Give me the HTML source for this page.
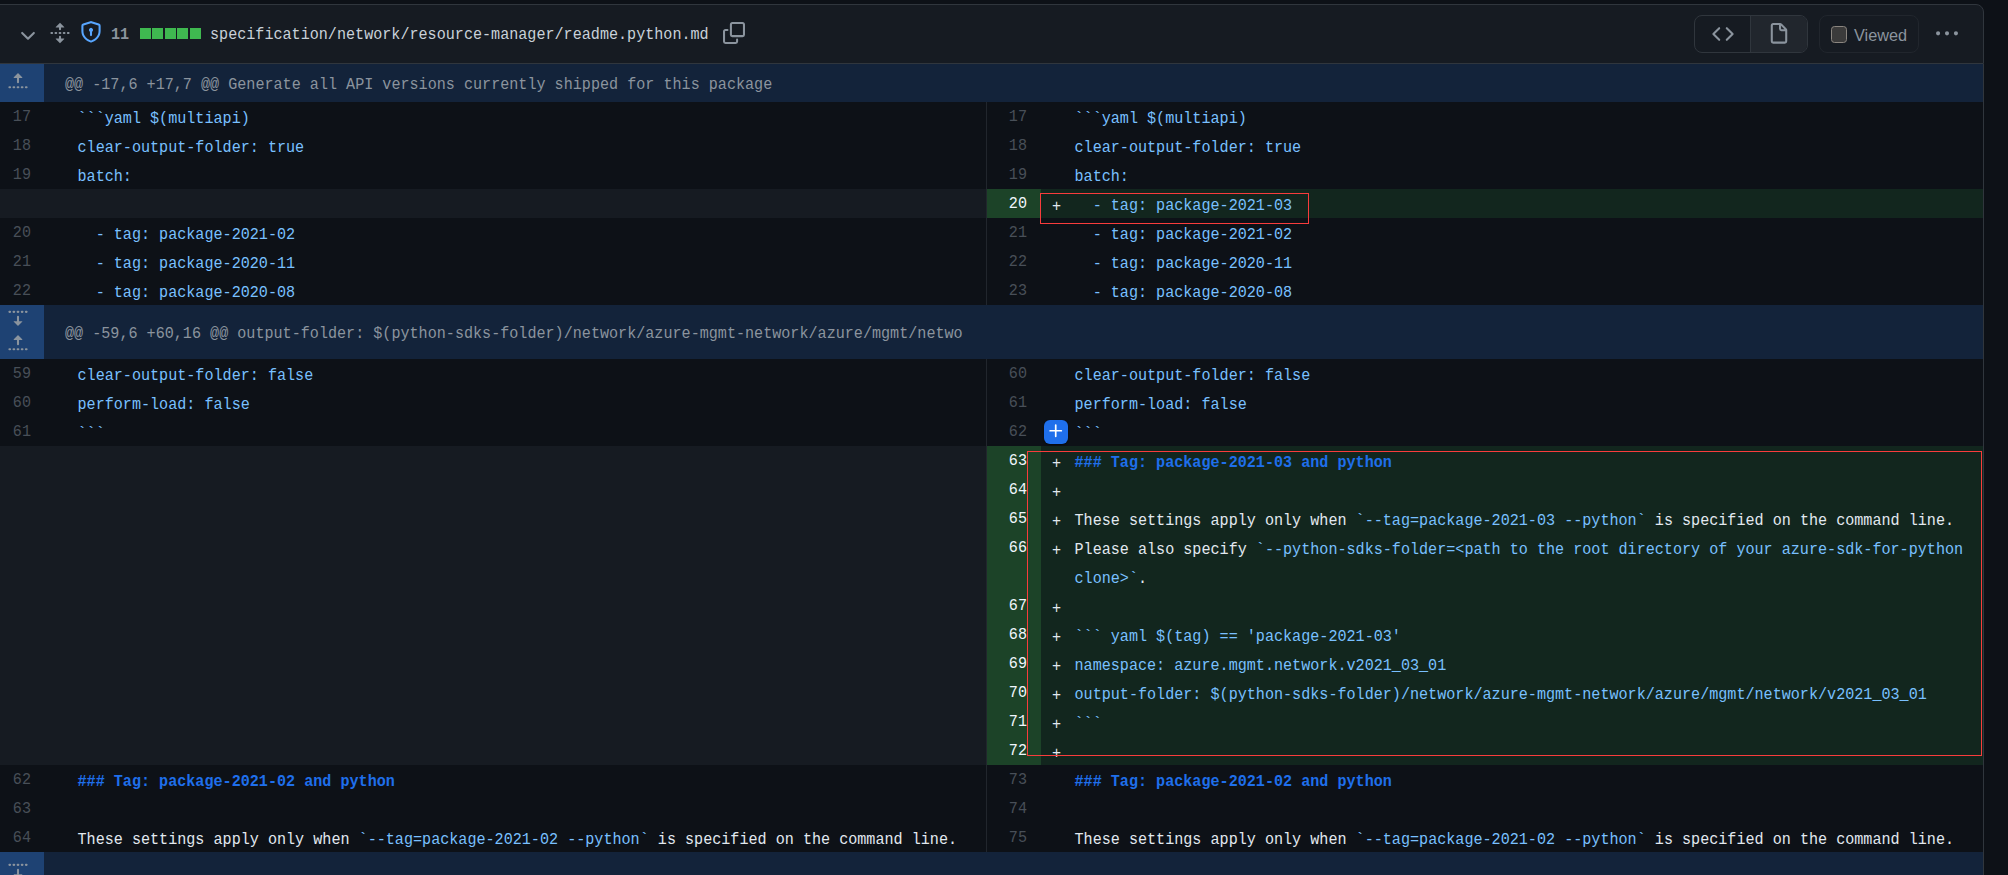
<!DOCTYPE html>
<html lang="en">
<head>
<meta charset="utf-8">
<title>readme.python.md diff</title>
<style>
html,body{margin:0;padding:0;}
body{width:2008px;height:875px;overflow:hidden;background:#0d1117;position:relative;
  font-family:"Liberation Mono","DejaVu Sans Mono",monospace;font-size:15.115px;color:#c9d1d9;}
*{box-sizing:border-box;}
.abs{position:absolute;}
svg{position:absolute;display:block;overflow:visible;}
#hdr{position:absolute;left:-10px;top:4px;width:1994px;height:60px;background:#161b22;border:1px solid #30363d;border-top-right-radius:8px;}
#rline{position:absolute;left:1983px;top:64px;width:1px;height:811px;background:#30363d;}
.mono{font-family:"Liberation Mono","DejaVu Sans Mono",monospace;font-size:15.115px;white-space:pre;}
.sans{font-family:"Liberation Sans","DejaVu Sans",sans-serif;}
/* background layer */
.bg{position:absolute;height:29px;}
.e{background:#161b22;}
.an{background:#1c4328;}
.ac{background:#12261e;}
.hk{background:#13233a;}
.hn{background:#1e4273;}
.dv{position:absolute;left:986px;width:1px;background:#21262d;}
/* text layer */
.t{position:absolute;height:29px;line-height:29px;white-space:pre;transform-origin:0 18px;}
.ln,.rn{text-align:right;color:#484f58;transform:translateY(1px) scaleY(1.05);}
.ln{left:0;width:31px;}
.rn{left:987px;width:40px;}
.lc,.rc,.mk{color:#e2e9f0;transform:translateY(3px) scaleY(1.05);}
.lc{left:77.5px;}
.rc{left:1074.5px;}
.mk{left:1052px;transform:translateY(3.7px) scaleY(1.05);}
.a{color:#f0f6fc;}
.b{color:#79c0ff;}
.h{color:#1f6feb;font-weight:bold;}
.ht{position:absolute;left:65px;color:#8b949e;white-space:pre;height:29px;line-height:29px;transform-origin:0 18px;transform:translateY(2px) scaleY(1.05);}
.hx{transform-origin:0 18px;transform:scaleY(1.05);}
.ic{fill:#8b949e;}
.red{position:absolute;border:1.5px solid #f83c3c;}
</style>
</head>
<body>
<div id="hdr"></div>
<div id="rline"></div>
<!-- chevron-down -->
<svg class="ic" style="left:16.8px;top:25.3px" width="22" height="22" viewBox="0 0 16 16"><path d="M12.78 5.22a.749.749 0 0 1 0 1.06l-4.25 4.25a.749.749 0 0 1-1.06 0L3.22 6.28a.749.749 0 1 1 1.06-1.06L8 8.939l3.72-3.719a.749.749 0 0 1 1.06 0Z"/></svg>
<!-- unfold -->
<svg class="ic" style="left:48.8px;top:21.5px" width="22" height="22" viewBox="0 0 16 16"><path d="m8.177.677 2.896 2.896a.25.25 0 0 1-.177.427H8.75v1.25a.75.75 0 0 1-1.5 0V4H5.104a.25.25 0 0 1-.177-.427L7.823.677a.25.25 0 0 1 .354 0ZM7.25 10.75a.75.75 0 0 1 1.5 0V12h2.146a.25.25 0 0 1 .177.427l-2.896 2.896a.25.25 0 0 1-.354 0l-2.896-2.896A.25.25 0 0 1 5.104 12H7.25v-1.25Zm-5-2a.75.75 0 0 0 0-1.5h-.5a.75.75 0 0 0 0 1.5h.5ZM6 8a.75.75 0 0 1-.75.75h-.5a.75.75 0 0 1 0-1.5h.5A.75.75 0 0 1 6 8Zm2.25.75a.75.75 0 0 0 0-1.5h-.5a.75.75 0 0 0 0 1.5h.5ZM12 8a.75.75 0 0 1-.75.75h-.5a.75.75 0 0 1 0-1.5h.5A.75.75 0 0 1 12 8Zm2.25.75a.75.75 0 0 0 0-1.5h-.5a.75.75 0 0 0 0 1.5h.5Z"/></svg>
<!-- shield-lock -->
<svg style="left:79.9px;top:20.7px;fill:#58a6ff" width="22" height="22" viewBox="0 0 16 16"><path d="m8.533.133 5.25 1.68A1.75 1.75 0 0 1 15 3.48V7c0 1.566-.32 3.182-1.303 4.682-.983 1.498-2.585 2.813-5.032 3.855a1.697 1.697 0 0 1-1.33 0c-2.447-1.042-4.049-2.357-5.032-3.855C1.32 10.182 1 8.566 1 7V3.48a1.75 1.75 0 0 1 1.217-1.667l5.25-1.68a1.748 1.748 0 0 1 1.066 0Zm-.61 1.429.001.001-5.25 1.68a.251.251 0 0 0-.174.237V7c0 1.36.275 2.666 1.057 3.859.784 1.194 2.121 2.342 4.366 3.298a.196.196 0 0 0 .154 0c2.245-.957 3.582-2.103 4.366-3.297C13.225 9.666 13.5 8.358 13.5 7V3.48a.25.25 0 0 0-.174-.238l-5.25-1.68a.25.25 0 0 0-.153 0ZM9.5 6.5c0 .536-.286 1.032-.75 1.3v2.45a.75.75 0 0 1-1.5 0V7.8A1.5 1.5 0 1 1 9.5 6.5Z"/></svg>
<div class="abs mono hx" style="left:111px;top:21px;line-height:29px;color:#8b949e;font-weight:bold">11</div>
<div class="abs" style="left:140px;top:28px;width:11px;height:11px;background:#3fb950"></div>
<div class="abs" style="left:152.4px;top:28px;width:11px;height:11px;background:#3fb950"></div>
<div class="abs" style="left:164.8px;top:28px;width:11px;height:11px;background:#3fb950"></div>
<div class="abs" style="left:177.1px;top:28px;width:11px;height:11px;background:#3fb950"></div>
<div class="abs" style="left:189.5px;top:28px;width:11px;height:11px;background:#3fb950"></div>
<div class="abs mono hx" style="left:210px;top:21px;line-height:29px;color:#c9d1d9">specification/network/resource-manager/readme.python.md</div>
<!-- copy -->
<svg class="ic" style="left:722.7px;top:21.5px" width="22" height="22" viewBox="0 0 16 16"><path d="M0 6.75C0 5.784.784 5 1.75 5h1.5a.75.75 0 0 1 0 1.5h-1.5a.25.25 0 0 0-.25.25v7.5c0 .138.112.25.25.25h7.5a.25.25 0 0 0 .25-.25v-1.5a.75.75 0 0 1 1.5 0v1.5A1.75 1.75 0 0 1 9.25 16h-7.5A1.75 1.75 0 0 1 0 14.25Z"/><path d="M5 1.75C5 .784 5.784 0 6.75 0h7.5C15.216 0 16 .784 16 1.75v7.5A1.75 1.75 0 0 1 14.25 11h-7.5A1.75 1.75 0 0 1 5 9.25Zm1.750-.25a.25.25 0 0 0-.25.25v7.5c0 .138.112.25.25.25h7.5a.25.25 0 0 0 .25-.25v-7.5a.25.25 0 0 0-.25-.25Z"/></svg>
<!-- segmented buttons -->
<div class="abs" style="left:1694px;top:15px;width:114px;height:38px;border:1px solid #30363d;border-radius:8px;background:#161b22;overflow:hidden">
  <div class="abs" style="left:55px;top:0;width:58px;height:36px;background:#21262d;border-left:1px solid #30363d"></div>
</div>
<svg class="ic" style="left:1712px;top:23px" width="22" height="22" viewBox="0 0 16 16"><path d="m11.28 3.22 4.25 4.25a.75.75 0 0 1 0 1.06l-4.25 4.25a.749.749 0 0 1-1.275-.326.749.749 0 0 1 .215-.734L13.94 8l-3.72-3.72a.749.749 0 0 1 .326-1.275.749.749 0 0 1 .734.215Zm-6.56 0a.751.751 0 0 1 1.042.018.751.751 0 0 1 .018 1.042L2.06 8l3.72 3.72a.749.749 0 0 1-.326 1.275.749.749 0 0 1-.734-.215L.47 8.53a.75.75 0 0 1 0-1.06Z"/></svg>
<svg class="ic" style="left:1768px;top:22.9px" width="22" height="22" viewBox="0 0 16 16"><path fill-rule="evenodd" d="M3.75 1.5a.25.25 0 0 0-.25.25v11.5c0 .138.112.25.25.25h8.5a.25.25 0 0 0 .25-.25V6H9.75A1.75 1.75 0 0 1 8 4.25V1.5H3.75zm5.75.56v2.19c0 .138.112.25.25.25h2.19L9.5 2.06zM2 1.75C2 .784 2.784 0 3.75 0h5.086c.464 0 .909.184 1.237.513l3.414 3.414c.329.328.513.773.513 1.237v8.086A1.75 1.75 0 0 1 12.250 15h-8.5A1.75 1.75 0 0 1 2 13.25V1.750z"/></svg>
<!-- viewed -->
<div class="abs" style="left:1819px;top:15px;width:100px;height:38px;border:1px solid #21262d;border-radius:8px;background:#161b22"></div>
<div class="abs" style="left:1830.5px;top:26px;width:16.5px;height:16.5px;border:1.5px solid #8b8680;border-radius:3.5px;background:#3b3b3b"></div>
<div class="abs sans" style="left:1854px;top:21px;line-height:29px;font-size:16.3px;color:#8b949e">Viewed</div>
<!-- kebab -->
<svg class="ic" style="left:1935.7px;top:23px" width="22" height="22" viewBox="0 0 16 16"><path d="M8 9a1.5 1.5 0 1 0 0-3 1.5 1.5 0 0 0 0 3ZM1.5 9a1.5 1.5 0 1 0 0-3 1.5 1.5 0 0 0 0 3Zm13 0a1.5 1.5 0 1 0 0-3 1.5 1.5 0 0 0 0 3Z"/></svg>

<!-- hunk 1 -->
<div class="bg hk" style="left:0px;top:64px;width:1983px;height:38px"></div>
<div class="bg hn" style="left:0px;top:64px;width:44px;height:38px"></div>
<div class="ht" style="top:68.5px">@@ -17,6 +17,7 @@ Generate all API versions currently shipped for this package</div>
<svg class="ic" style="left:7px;top:71px" width="22" height="22" viewBox="0 0 16 16"><path d="M7.823 1.677 4.927 4.573A.25.25 0 0 0 5.104 5H7.25v3.236a.75.75 0 1 0 1.5 0V5h2.146a.25.25 0 0 0 .177-.427L8.177 1.677a.25.25 0 0 0-.354 0ZM13.75 11a.75.75 0 0 0 0 1.5h.5a.75.75 0 0 0 0-1.5h-.5Zm-3.75.75a.75.75 0 0 1 .75-.75h.5a.75.75 0 0 1 0 1.5h-.5a.75.75 0 0 1-.75-.75ZM7.75 11a.75.75 0 0 0 0 1.5h.5a.75.75 0 0 0 0-1.5h-.5ZM4 11.75a.75.75 0 0 1 .75-.75h.5a.75.75 0 0 1 0 1.5h-.5a.75.75 0 0 1-.75-.75ZM1.75 11a.75.75 0 0 0 0 1.5h.5a.75.75 0 0 0 0-1.5h-.5Z"/></svg>
<div class="dv" style="top:102px;height:29px"></div>
<div class="t ln" style="top:102px">17</div>
<div class="t lc" style="top:102px"><span class="b">```yaml $(multiapi)</span></div>
<div class="t rn" style="top:102px">17</div>
<div class="t rc" style="top:102px"><span class="b">```yaml $(multiapi)</span></div>
<div class="dv" style="top:131px;height:29px"></div>
<div class="t ln" style="top:131px">18</div>
<div class="t lc" style="top:131px"><span class="b">clear-output-folder: true</span></div>
<div class="t rn" style="top:131px">18</div>
<div class="t rc" style="top:131px"><span class="b">clear-output-folder: true</span></div>
<div class="dv" style="top:160px;height:29px"></div>
<div class="t ln" style="top:160px">19</div>
<div class="t lc" style="top:160px"><span class="b">batch:</span></div>
<div class="t rn" style="top:160px">19</div>
<div class="t rc" style="top:160px"><span class="b">batch:</span></div>
<div class="bg e" style="left:0px;top:189px;width:986px;height:29px"></div>
<div class="dv" style="top:189px;height:29px"></div>
<div class="bg an" style="left:987px;top:189px;width:54px;height:29px"></div>
<div class="bg ac" style="left:1041px;top:189px;width:942px;height:29px"></div>
<div class="t rn a" style="top:189px">20</div>
<div class="t mk" style="top:189px">+</div>
<div class="t rc" style="top:189px"><span class="b">  - tag: package-2021-03</span></div>
<div class="dv" style="top:218px;height:29px"></div>
<div class="t ln" style="top:218px">20</div>
<div class="t lc" style="top:218px"><span class="b">  - tag: package-2021-02</span></div>
<div class="t rn" style="top:218px">21</div>
<div class="t rc" style="top:218px"><span class="b">  - tag: package-2021-02</span></div>
<div class="dv" style="top:247px;height:29px"></div>
<div class="t ln" style="top:247px">21</div>
<div class="t lc" style="top:247px"><span class="b">  - tag: package-2020-11</span></div>
<div class="t rn" style="top:247px">22</div>
<div class="t rc" style="top:247px"><span class="b">  - tag: package-2020-11</span></div>
<div class="dv" style="top:276px;height:29px"></div>
<div class="t ln" style="top:276px">22</div>
<div class="t lc" style="top:276px"><span class="b">  - tag: package-2020-08</span></div>
<div class="t rn" style="top:276px">23</div>
<div class="t rc" style="top:276px"><span class="b">  - tag: package-2020-08</span></div>
<!-- hunk 2 -->
<div class="bg hk" style="left:0px;top:305px;width:1983px;height:54px"></div>
<div class="bg hn" style="left:0px;top:305px;width:44px;height:54px"></div>
<div class="ht" style="top:317.5px">@@ -59,6 +60,16 @@ output-folder: $(python-sdks-folder)/network/azure-mgmt-network/azure/mgmt/netwo</div>
<svg class="ic" style="left:7px;top:306px" width="22" height="22" viewBox="0 0 16 16"><path d="m8.177 14.323 2.896-2.896a.25.25 0 0 0-.177-.427H8.75V7.764a.75.75 0 1 0-1.5 0V11H5.104a.25.25 0 0 0-.177.427l2.896 2.896a.25.25 0 0 0 .354 0ZM2.25 5a.75.75 0 0 0 0-1.5h-.5a.75.75 0 0 0 0 1.5h.5ZM6 4.25a.75.75 0 0 1-.75.75h-.5a.75.75 0 0 1 0-1.5h.5a.75.75 0 0 1 .75.75ZM8.25 5a.75.75 0 0 0 0-1.5h-.5a.75.75 0 0 0 0 1.5h.5ZM12 4.25a.75.75 0 0 1-.75.75h-.5a.75.75 0 0 1 0-1.5h.5a.75.75 0 0 1 .75.75Zm2.25.75a.75.75 0 0 0 0-1.5h-.5a.75.75 0 0 0 0 1.5h.5Z"/></svg>
<svg class="ic" style="left:7px;top:333px" width="22" height="22" viewBox="0 0 16 16"><path d="M7.823 1.677 4.927 4.573A.25.25 0 0 0 5.104 5H7.25v3.236a.75.75 0 1 0 1.5 0V5h2.146a.25.25 0 0 0 .177-.427L8.177 1.677a.25.25 0 0 0-.354 0ZM13.75 11a.75.75 0 0 0 0 1.5h.5a.75.75 0 0 0 0-1.5h-.5Zm-3.75.75a.75.75 0 0 1 .75-.75h.5a.75.75 0 0 1 0 1.5h-.5a.75.75 0 0 1-.75-.75ZM7.75 11a.75.75 0 0 0 0 1.5h.5a.75.75 0 0 0 0-1.5h-.5ZM4 11.75a.75.75 0 0 1 .75-.75h.5a.75.75 0 0 1 0 1.5h-.5a.75.75 0 0 1-.75-.75ZM1.75 11a.75.75 0 0 0 0 1.5h.5a.75.75 0 0 0 0-1.5h-.5Z"/></svg>
<div class="dv" style="top:359px;height:29px"></div>
<div class="t ln" style="top:359px">59</div>
<div class="t lc" style="top:359px"><span class="b">clear-output-folder: false</span></div>
<div class="t rn" style="top:359px">60</div>
<div class="t rc" style="top:359px"><span class="b">clear-output-folder: false</span></div>
<div class="dv" style="top:388px;height:29px"></div>
<div class="t ln" style="top:388px">60</div>
<div class="t lc" style="top:388px"><span class="b">perform-load: false</span></div>
<div class="t rn" style="top:388px">61</div>
<div class="t rc" style="top:388px"><span class="b">perform-load: false</span></div>
<div class="dv" style="top:417px;height:29px"></div>
<div class="t ln" style="top:417px">61</div>
<div class="t lc" style="top:417px"><span class="b">```</span></div>
<div class="t rn" style="top:417px">62</div>
<div class="t rc" style="top:417px"><span class="b">```</span></div>
<!-- added block -->
<div class="bg e" style="left:0px;top:446px;width:986px;height:29px"></div>
<div class="dv" style="top:446px;height:29px"></div>
<div class="bg an" style="left:987px;top:446px;width:54px;height:29px"></div>
<div class="bg ac" style="left:1041px;top:446px;width:942px;height:29px"></div>
<div class="t rn a" style="top:446px">63</div>
<div class="t mk" style="top:446px">+</div>
<div class="t rc" style="top:446px"><span class="h">### Tag: package-2021-03 and python</span></div>
<div class="bg e" style="left:0px;top:475px;width:986px;height:29px"></div>
<div class="dv" style="top:475px;height:29px"></div>
<div class="bg an" style="left:987px;top:475px;width:54px;height:29px"></div>
<div class="bg ac" style="left:1041px;top:475px;width:942px;height:29px"></div>
<div class="t rn a" style="top:475px">64</div>
<div class="t mk" style="top:475px">+</div>
<div class="bg e" style="left:0px;top:504px;width:986px;height:29px"></div>
<div class="dv" style="top:504px;height:29px"></div>
<div class="bg an" style="left:987px;top:504px;width:54px;height:29px"></div>
<div class="bg ac" style="left:1041px;top:504px;width:942px;height:29px"></div>
<div class="t rn a" style="top:504px">65</div>
<div class="t mk" style="top:504px">+</div>
<div class="t rc" style="top:504px">These settings apply only when <span class="b">`--tag=package-2021-03 --python`</span> is specified on the command line.</div>
<div class="bg e" style="left:0px;top:533px;width:986px;height:58px"></div>
<div class="dv" style="top:533px;height:58px"></div>
<div class="bg an" style="left:987px;top:533px;width:54px;height:58px"></div>
<div class="bg ac" style="left:1041px;top:533px;width:942px;height:58px"></div>
<div class="t rn a" style="top:533px">66</div>
<div class="t mk" style="top:533px">+</div>
<div class="t rc" style="top:533px">Please also specify <span class="b">`--python-sdks-folder=&lt;path to the root directory of your azure-sdk-for-python</span></div>
<div class="t rc" style="top:562px"><span class="b">clone&gt;`</span>.</div>
<div class="bg e" style="left:0px;top:591px;width:986px;height:29px"></div>
<div class="dv" style="top:591px;height:29px"></div>
<div class="bg an" style="left:987px;top:591px;width:54px;height:29px"></div>
<div class="bg ac" style="left:1041px;top:591px;width:942px;height:29px"></div>
<div class="t rn a" style="top:591px">67</div>
<div class="t mk" style="top:591px">+</div>
<div class="bg e" style="left:0px;top:620px;width:986px;height:29px"></div>
<div class="dv" style="top:620px;height:29px"></div>
<div class="bg an" style="left:987px;top:620px;width:54px;height:29px"></div>
<div class="bg ac" style="left:1041px;top:620px;width:942px;height:29px"></div>
<div class="t rn a" style="top:620px">68</div>
<div class="t mk" style="top:620px">+</div>
<div class="t rc" style="top:620px"><span class="b">``` yaml $(tag) == 'package-2021-03'</span></div>
<div class="bg e" style="left:0px;top:649px;width:986px;height:29px"></div>
<div class="dv" style="top:649px;height:29px"></div>
<div class="bg an" style="left:987px;top:649px;width:54px;height:29px"></div>
<div class="bg ac" style="left:1041px;top:649px;width:942px;height:29px"></div>
<div class="t rn a" style="top:649px">69</div>
<div class="t mk" style="top:649px">+</div>
<div class="t rc" style="top:649px"><span class="b">namespace: azure.mgmt.network.v2021_03_01</span></div>
<div class="bg e" style="left:0px;top:678px;width:986px;height:29px"></div>
<div class="dv" style="top:678px;height:29px"></div>
<div class="bg an" style="left:987px;top:678px;width:54px;height:29px"></div>
<div class="bg ac" style="left:1041px;top:678px;width:942px;height:29px"></div>
<div class="t rn a" style="top:678px">70</div>
<div class="t mk" style="top:678px">+</div>
<div class="t rc" style="top:678px"><span class="b">output-folder: $(python-sdks-folder)/network/azure-mgmt-network/azure/mgmt/network/v2021_03_01</span></div>
<div class="bg e" style="left:0px;top:707px;width:986px;height:29px"></div>
<div class="dv" style="top:707px;height:29px"></div>
<div class="bg an" style="left:987px;top:707px;width:54px;height:29px"></div>
<div class="bg ac" style="left:1041px;top:707px;width:942px;height:29px"></div>
<div class="t rn a" style="top:707px">71</div>
<div class="t mk" style="top:707px">+</div>
<div class="t rc" style="top:707px"><span class="b">```</span></div>
<div class="bg e" style="left:0px;top:736px;width:986px;height:29px"></div>
<div class="dv" style="top:736px;height:29px"></div>
<div class="bg an" style="left:987px;top:736px;width:54px;height:29px"></div>
<div class="bg ac" style="left:1041px;top:736px;width:942px;height:29px"></div>
<div class="t rn a" style="top:736px">72</div>
<div class="t mk" style="top:736px">+</div>
<!-- trailing context -->
<div class="dv" style="top:765px;height:29px"></div>
<div class="t ln" style="top:765px">62</div>
<div class="t lc" style="top:765px"><span class="h">### Tag: package-2021-02 and python</span></div>
<div class="t rn" style="top:765px">73</div>
<div class="t rc" style="top:765px"><span class="h">### Tag: package-2021-02 and python</span></div>
<div class="dv" style="top:794px;height:29px"></div>
<div class="t ln" style="top:794px">63</div>
<div class="t lc" style="top:794px"></div>
<div class="t rn" style="top:794px">74</div>
<div class="t rc" style="top:794px"></div>
<div class="dv" style="top:823px;height:29px"></div>
<div class="t ln" style="top:823px">64</div>
<div class="t lc" style="top:823px">These settings apply only when <span class="b">`--tag=package-2021-02 --python`</span> is specified on the command line.</div>
<div class="t rn" style="top:823px">75</div>
<div class="t rc" style="top:823px">These settings apply only when <span class="b">`--tag=package-2021-02 --python`</span> is specified on the command line.</div>
<!-- hunk 3 -->
<div class="bg hk" style="left:0px;top:852px;width:1983px;height:54px"></div>
<div class="bg hn" style="left:0px;top:852px;width:44px;height:54px"></div>
<svg class="ic" style="left:7px;top:858.5px" width="22" height="22" viewBox="0 0 16 16"><path d="m8.177 14.323 2.896-2.896a.25.25 0 0 0-.177-.427H8.75V7.764a.75.75 0 1 0-1.5 0V11H5.104a.25.25 0 0 0-.177.427l2.896 2.896a.25.25 0 0 0 .354 0ZM2.25 5a.75.75 0 0 0 0-1.5h-.5a.75.75 0 0 0 0 1.5h.5ZM6 4.25a.75.75 0 0 1-.75.75h-.5a.75.75 0 0 1 0-1.5h.5a.75.75 0 0 1 .75.75ZM8.25 5a.75.75 0 0 0 0-1.5h-.5a.75.75 0 0 0 0 1.5h.5ZM12 4.25a.75.75 0 0 1-.75.75h-.5a.75.75 0 0 1 0-1.5h.5a.75.75 0 0 1 .75.75Zm2.25.75a.75.75 0 0 0 0-1.5h-.5a.75.75 0 0 0 0 1.5h.5Z"/></svg>
<!-- blue add-comment button -->
<div class="abs" style="left:1044px;top:420px;width:24px;height:24px;border-radius:6px;background:#1f6feb;box-shadow:0 1px 2px rgba(0,0,0,.5)"></div>
<svg style="left:1047px;top:421.5px;fill:#ffffff" width="18" height="18" viewBox="0 0 16 16"><path d="M7.75 2a.75.75 0 0 1 .75.75V7h4.25a.75.75 0 0 1 0 1.5H8.5v4.25a.75.75 0 0 1-1.5 0V8.5H2.75a.75.75 0 0 1 0-1.5H7V2.75A.75.75 0 0 1 7.75 2Z"/></svg>
<!-- red annotation boxes -->
<div class="red" style="left:1040px;top:193px;width:269px;height:30.5px"></div>
<div class="red" style="left:1027px;top:451px;width:954.5px;height:304.5px"></div>

</body>
</html>
